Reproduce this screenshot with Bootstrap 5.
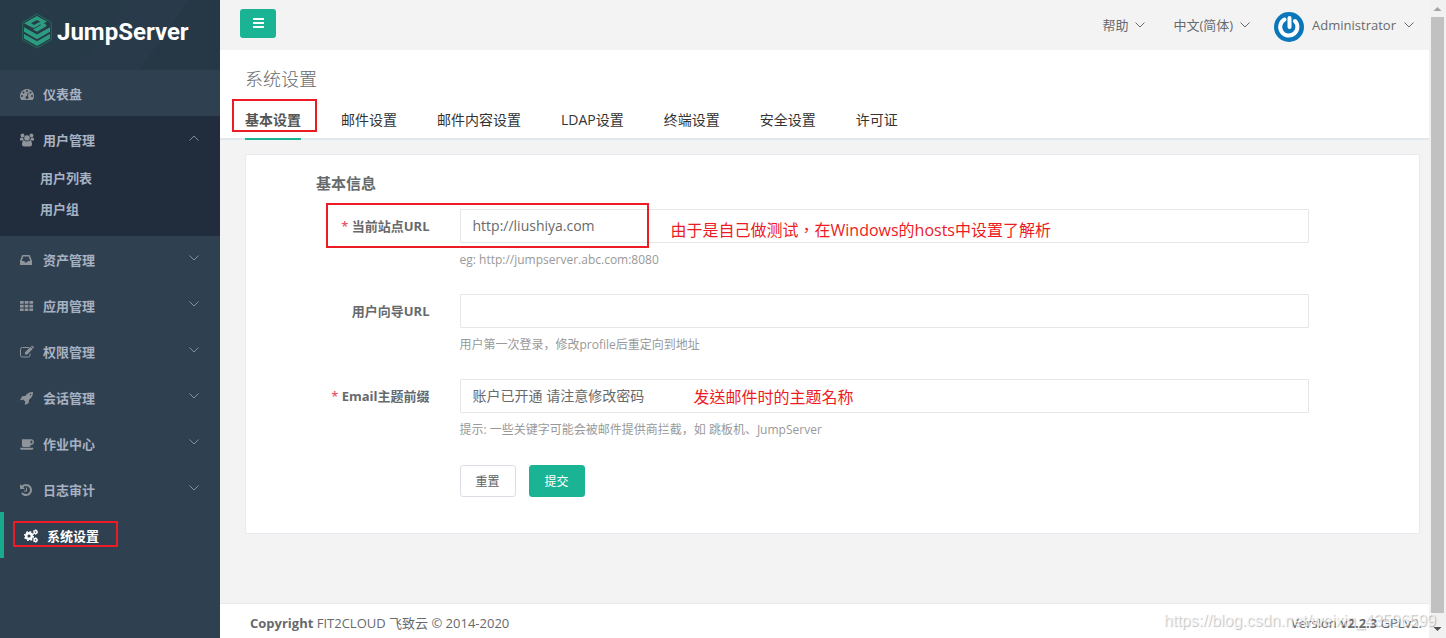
<!DOCTYPE html>
<html lang="zh-CN">
<head>
<meta charset="utf-8">
<meta name="viewport" content="width=device-width, initial-scale=1">
<title>JumpServer - 系统设置</title>
<link href="https://cdn.jsdelivr.net/npm/bootstrap@5.3.0/dist/css/bootstrap.min.css" rel="stylesheet">
<style>
  body { font-family: "Open Sans", "Noto Sans CJK SC", sans-serif; font-size: 13px; line-height: 20px; color: #676a6c; background: #f3f3f4; }
  a { text-decoration: none; color: inherit; }
  .app { min-height: 100vh; }
  .side { width: 220px; background: #2f4050; color: #a7b1c2; }
  .brand { height: 70px; padding-left: 22px; background: linear-gradient(125deg, #273a48 0 48%, #293b4a 48% 70%, #263846 70%); }
  .brand-name { font: 700 24px/30px Roboto, "Open Sans", sans-serif; color: #fff; margin: 2px 0 0 5px; }
  .side-link { height: 46px; padding: 2px 21px 0 20px; font-weight: 600; }
  .side-link .ico { width: 14px; height: 14px; margin-right: 9px; color: #8f949b; flex: none; }
  .side-link .chev { margin-left: auto; margin-bottom: 5px; opacity: .7; }
  .group-open { background: #212d3c; padding-bottom: 12px; }
  .group-open .sub { height: 31px; padding-left: 40px; font-weight: 600; }
  .side-link.on { border-left: 4px solid #19aa8d; color: #fff; }
  .side-link.on .ico { color: #fff; }
  .chev { width: 10px; height: 6px; fill: none; stroke: currentColor; flex: none; }
  .topbar { height: 50px; background: #f3f3f4; padding: 0 15px 0 20px; }
  .topbar .chev { margin-left: 7px; }
  .green { background: #1ab394; border-color: #1ab394; color: #fff; }
  .menu-btn { width: 36px; height: 29px; border: 0; border-radius: 3px; }
  .heading { background: #fff; border-bottom: 2px solid #e2e7ec; padding: 17px 25px 0; }
  .heading h2 { font-size: 18px; line-height: 24px; font-weight: 300; margin: 0 0 7px; }
  .tabs { gap: 40px; font-size: 14px; color: #333; }
  .tabs a { height: 42px; line-height: 44px; margin-bottom: -2px; border-bottom: 2px solid transparent; }
  .tabs a.on { border-color: #1ab394; font-weight: 600; color: #555; }
  .mark-box { position: absolute; border: 2px solid #ed1c24; pointer-events: none; }
  .content-area { padding: 14px 9px 0 25px; }
  .panel { background: #fff; border: 1px solid #e7eaf0; border-radius: 2px; padding: 17px 12px 36px 18px; }
  .panel .row { --bs-gutter-x: 30px; }
  .panel h3 { font-size: 15px; line-height: 22px; font-weight: 600; margin: 0 0 15px 52px; }
  .field { margin-bottom: 24px; }
  .field label { font-weight: 700; line-height: 34px; text-align: right; }
  .star { color: #ed5565; font-weight: 600; }
  .field .form-control { height: 34px; padding: 3px 12px 5px; font-size: 14px; line-height: 24px; border: 1px solid #e5e6e7; border-radius: 1px; color: #676a6c; }
  .field .help { font-size: 12px; line-height: 17px; margin-top: 8px; padding-bottom: 2px; color: #999; }
  .note { position: absolute; color: #ed1c24; font: 16px/22px "Open Sans", "Noto Sans CJK TC", sans-serif; white-space: nowrap; pointer-events: none; }
  .act { width: 56px; height: 32px; font-size: 12px; line-height: 18px; padding: 1px 0 0; border-radius: 3px; }
  .act-row { gap: 13px; padding-top: 1px; }
  .plain { background: #fff; border: 1px solid #dcdce4; color: #606266; }
  .foot { background: #fff; border-top: 1px solid #e7eaec; height: 35px; padding: 4px 7px 0 30px; }
  .bar-track { width: 17px; background: #f1f1f1; }
  .bar-thumb { width: 13px; background: #c1c1c1; }
  .bar-track svg { width: 17px; height: 17px; flex: none; }
  .stamp { position: absolute; right: 10px; bottom: 7px; font: 16px/20px "Liberation Sans", sans-serif; color: rgba(255,255,255,.7); text-shadow: 1px 1px 1px rgba(90,90,90,.4); pointer-events: none; }
</style>
</head>
<body>
<svg width="0" height="0" class="position-absolute">
  <symbol id="down" viewBox="0 0 10 6"><path d="M.5.5 5 5 9.500.5"/></symbol>
  <symbol id="up" viewBox="0 0 10 6"><path d="M.5 5.500 5 1l4.500 4.500"/></symbol>
</svg>
<div class="app d-flex position-relative">
  <nav class="side flex-shrink-0">
    <a class="brand d-flex align-items-center pb-2" href="#">
      <svg width="30" height="36" viewBox="0 0 30 36">
        <path d="M15 1 29.300 9.300v17.400L15 35 .7 26.700V9.300z" fill="none" stroke="#23705f" stroke-width=".9"/>
        <g fill="#2c9c80">
          <path d="M2 14.200 15 21.500l13-7.300v4.600L15 26.200 2 18.800zM2 21 15 28.300 28 21v4.600l-13 7.500L2 25.600z"/>
          <path d="M2 10.300 15 3l10 5.500-3.500 2L15 7 9 10.300l3 1.700 4.500-2.500q2-1 4 0l3 1.700q2 1.300 0 2.600L15 18.800l-4-2.300 8-4.500-.8-.4-5 2.800q-1.500.8-3 0z"/>
        </g>
      </svg>
      <span class="brand-name">JumpServer</span>
    </a>
    <a class="side-link d-flex align-items-center" href="#">
      <svg class="ico" viewBox="0 0 1792 1792" fill="currentColor"><path d="M384 1152q0-53-37.500-90.500t-90.500-37.500-90.500 37.500-37.500 90.500 37.500 90.500 90.500 37.500 90.500-37.500 37.500-90.500zm192-448q0-53-37.500-90.500t-90.500-37.500-90.500 37.500-37.500 90.500 37.500 90.500 90.500 37.500 90.500-37.500 37.500-90.500zm428 481l101-382q6-26-7.500-48.500t-38.500-29.500-48 6.500-30 39.500l-101 382q-60 5-107 43.500t-63 98.500q-20 77 20 146t117 89 146-20 89-117q16-60-6-117t-72-91zm660-33q0-53-37.500-90.500t-90.500-37.500-90.500 37.500-37.500 90.500 37.500 90.500 90.500 37.500 90.500-37.500 37.500-90.500zm-640-640q0-53-37.500-90.500t-90.500-37.500-90.500 37.500-37.500 90.500 37.500 90.500 90.500 37.500 90.500-37.500 37.500-90.500zm448 192q0-53-37.500-90.500t-90.500-37.500-90.500 37.500-37.500 90.500 37.500 90.500 90.500 37.500 90.500-37.500 37.500-90.500zm320 448q0 261-141 483-19 29-54 29h-1402q-35 0-54-29-141-221-141-483 0-182 71-348t191-286 286-191 348-71 348 71 286 191 191 286 71 348z"/></svg>
      仪表盘</a>
    <div class="group-open">
      <a class="side-link d-flex align-items-center" href="#">
        <svg class="ico" viewBox="0 0 14 14" fill="currentColor"><circle cx="2.500" cy="2.500" r="1.900"/><circle cx="11.500" cy="2.500" r="1.900"/><circle cx="7" cy="5" r="2.800"/><path d="M0 7.500V6q0-1.500 1.200-1.500l2 .5q0 1.600 1 2.500zM14 7.500V6q0-1.500-1.200-1.500l-2 .5q0 1.600-1 2.500zM2 11.500Q2 7.500 4.300 7.500 7 9.500 9.700 7.500 12 7.500 12 11.500q0 2-2 2H4q-2 0-2-2z"/></svg>
        用户管理<svg class="chev"><use href="#up"/></svg></a>
      <a class="sub d-flex align-items-center" href="#">用户列表</a>
      <a class="sub d-flex align-items-center" href="#">用户组</a>
    </div>
    <a class="side-link d-flex align-items-center" href="#">
      <svg class="ico" viewBox="0 0 14 14" fill="currentColor"><path fill-rule="evenodd" d="M2.800 2h6.400q.6 0 .8.600L12 8v3.500q0 .5-.5.500H.5q-.5 0-.5-.5V8l2-5.400q.2-.6.800-.6zM3.300 3.500 1.700 8h2.500l.8 1.500h2L7.800 8h2.500L8.700 3.500z"/></svg>
      资产管理<svg class="chev"><use href="#down"/></svg></a>
    <a class="side-link d-flex align-items-center" href="#">
      <svg class="ico" viewBox="0 0 14 14" fill="currentColor"><path d="M0 2h3.700v2.700H0zM4.700 2h3.700v2.700H4.700zM9.400 2h3.700v2.700H9.400zM0 5.700h3.700v2.700H0zM4.700 5.700h3.700v2.700H4.700zM9.400 5.700h3.700v2.700H9.400zM0 9.400h3.700v2.700H0zM4.700 9.400h3.700v2.700H4.700zM9.400 9.400h3.700v2.700H9.400z"/></svg>
      应用管理<svg class="chev"><use href="#down"/></svg></a>
    <a class="side-link d-flex align-items-center" href="#">
      <svg class="ico" viewBox="0 0 14 14" fill="currentColor"><path d="M9 2.500H2.300Q.5 2.500.5 4.300v5.900q0 1.800 1.800 1.800h5.900q1.800 0 1.800-1.800V8.500" fill="none" stroke="currentColor"/><path d="M5 9.500V7.300l5.500-5.500L12.700 4 7.200 9.500zM11 1.300l.6-.5q.4-.3.800 0L13.700 2q.3.500 0 .9l-.6.600z"/></svg>
      权限管理<svg class="chev"><use href="#down"/></svg></a>
    <a class="side-link d-flex align-items-center" href="#">
      <svg class="ico" viewBox="0 0 1792 1792" fill="currentColor"><path d="M1440 448q0-40-28-68t-68-28-68 28-28 68 28 68 68 28 68-28 28-68zm224-288q0 249-75.500 430.500t-253.500 360.500q-81 80-195 176l-20 379q-2 16-16 26l-384 224q-7 4-16 4-12 0-23-9l-64-64q-13-14-8-32l85-276-281-281-276 85q-3 1-9 1-14 0-23-9l-64-64q-17-19-5-39l224-384q10-14 26-16l379-20q96-114 176-195 188-187 358-258t431-71q14 0 24 9.500t10 22.500z"/></svg>
      会话管理<svg class="chev"><use href="#down"/></svg></a>
    <a class="side-link d-flex align-items-center" href="#">
      <svg class="ico" viewBox="0 0 1856 1792" fill="currentColor"><path d="M1664 640q0-80-56-136t-136-56h-64v384h64q80 0 136-56t56-136zm-1664 768h1792q0 106-75 181t-181 75h-1280q-106 0-181-75t-75-181zm1856-768q0 159-112.500 271.500t-271.500 112.500h-64v32q0 92-66 158t-158 66h-704q-92 0-158-66t-66-158v-736q0-26 19-45t45-19h1152q159 0 271.500 112.500t112.500 271.500z"/></svg>
      作业中心<svg class="chev"><use href="#down"/></svg></a>
    <a class="side-link d-flex align-items-center" href="#">
      <svg class="ico" viewBox="128 0 1792 1792" fill="currentColor"><path d="M1664 896q0 156-61 298t-164 245-245 164-298 61q-172 0-327-72.500t-264-204.500q-7-10-6.500-22.500t8.500-20.500l137-138q10-9 25-9 16 2 23 12 73 95 179 147t225 52q104 0 198.500-40.500t163.500-109.500 109.500-163.500 40.500-198.500-40.500-198.500-109.500-163.500-163.500-109.500-198.500-40.500q-98 0-188 35.500t-160 101.500l137 138q31 30 14 69-17 40-59 40h-448q-26 0-45-19t-19-45v-448q0-42 40-59 39-17 69 14l130 129q107-101 244.500-156.500t284.500-55.500q156 0 298 61t245 164 164 245 61 298zm-640-288v448q0 14-9 23t-23 9h-320q-14 0-23-9t-9-23v-64q0-14 9-23t23-9h224v-352q0-14 9-23t23-9h64q14 0 23 9t9 23z"/></svg>
      日志审计<svg class="chev"><use href="#down"/></svg></a>
    <a class="side-link on d-flex align-items-center position-relative" href="#">
      <svg class="ico" viewBox="0 0 14 14" fill="none" stroke="currentColor"><circle cx="5" cy="7" r="2.800" stroke-width="2.400"/><circle cx="5" cy="7" r="4.300" stroke-width="1.600" stroke-dasharray="1.700 1.677"/><circle cx="11.500" cy="3" r="1.500" stroke-width="1.400"/><circle cx="11.500" cy="3" r="2.300" stroke-width=".8" stroke-dasharray="1.200"/><circle cx="11.500" cy="11" r="1.500" stroke-width="1.400"/><circle cx="11.500" cy="11" r="2.300" stroke-width=".8" stroke-dasharray="1.200"/></svg>
      系统设置<span class="mark-box" style="left:9px;top:9px;width:105px;height:26px"></span></a>
  </nav>

  <div class="flex-grow-1 d-flex flex-column">
    <header class="topbar d-flex align-items-center">
      <button class="menu-btn green mb-1 p-0 d-flex align-items-center justify-content-center" type="button" aria-label="菜单"><svg width="11" height="10" fill="#fff"><path d="M0 0h11v2H0zM0 4h11v2H0zM0 8h11v2H0z"/></svg></button>
      <a class="ms-auto d-flex align-items-center" href="#">帮助<svg class="chev"><use href="#down"/></svg></a>
      <a class="d-flex align-items-center ms-4 ps-1" href="#">中文(简体)<svg class="chev"><use href="#down"/></svg></a>
      <a class="d-flex align-items-center ms-4" href="#">
        <svg class="me-2 mt-1" width="30" height="30" viewBox="0 0 30 30" fill="none" stroke-linecap="round"><circle cx="15" cy="15" r="15" fill="#0b76b9"/><path d="M10.500 7.500A8.600 8.600 0 1 0 21 9M15.500 6v9" stroke="#fff" stroke-width="4"/></svg>
        Administrator<svg class="chev ms-2"><use href="#down"/></svg></a>
    </header>

    <div class="heading">
      <h2>系统设置</h2>
      <nav class="tabs d-flex">
        <a class="on position-relative" href="#">基本设置<span class="mark-box" style="left:-13px;top:1px;width:85px;height:33px"></span></a>
        <a href="#">邮件设置</a><a href="#">邮件内容设置</a><a href="#">LDAP设置</a><a href="#">终端设置</a><a href="#">安全设置</a><a href="#">许可证</a>
      </nav>
    </div>

    <main class="content-area flex-grow-1">
      <form class="panel">
        <h3>基本信息</h3>
        <div class="row field position-relative">
          <label class="col-2" for="site"><span class="star">*</span> 当前站点URL</label>
          <div class="col-9 position-relative">
            <input class="form-control" id="site" value="http://liushiya.com">
            <span class="note" lang="zh-Hant" style="left:226px;top:10px">由于是自己做测试，在Windows的hosts中设置了解析</span>
            <div class="help">eg: http://jumpserver.abc.com:8080</div>
          </div>
          <span class="mark-box p-0" style="left:77px;top:-6px;width:323px;height:45px"></span>
        </div>
        <div class="row field">
          <label class="col-2" for="guide">用户向导URL</label>
          <div class="col-9">
            <input class="form-control" id="guide">
            <div class="help">用户第一次登录，修改profile后重定向到地址</div>
          </div>
        </div>
        <div class="row field">
          <label class="col-2" for="prefix"><span class="star">*</span> Email主题前缀</label>
          <div class="col-9 position-relative">
            <input class="form-control" id="prefix" value="账户已开通 请注意修改密码">
            <span class="note" lang="zh-Hant" style="left:249px;top:7px">发送邮件时的主题名称</span>
            <div class="help">提示: 一些关键字可能会被邮件提供商拦截，如 跳板机、JumpServer</div>
          </div>
        </div>
        <div class="row">
          <div class="act-row col-9 offset-2 d-flex">
            <button class="btn act plain" type="reset">重置</button>
            <button class="btn act green" type="submit">提交</button>
          </div>
        </div>
      </form>
    </main>

    <footer class="foot d-flex justify-content-between align-items-center">
      <div><b>Copyright</b> FIT2CLOUD 飞致云 © 2014-2020</div>
      <div>Version <b>v2.2.3</b> GPLv2.</div>
    </footer>
  </div>

  <div class="bar-track d-flex flex-column align-items-center flex-shrink-0" aria-hidden="true">
    <svg fill="#a3a3a3"><path d="M4.500 11h8l-4-4z"/></svg>
    <div class="bar-thumb flex-grow-1"></div>
    <svg class="mt-2" fill="#505050"><path d="M4.500 6h8l-4 4z"/></svg>
  </div>
  <span class="stamp">https://blog.csdn.net/weixin_43596599</span>
</div>
<script src="https://cdn.jsdelivr.net/npm/bootstrap@5.3.0/dist/js/bootstrap.bundle.min.js"></script>
</body>
</html>
